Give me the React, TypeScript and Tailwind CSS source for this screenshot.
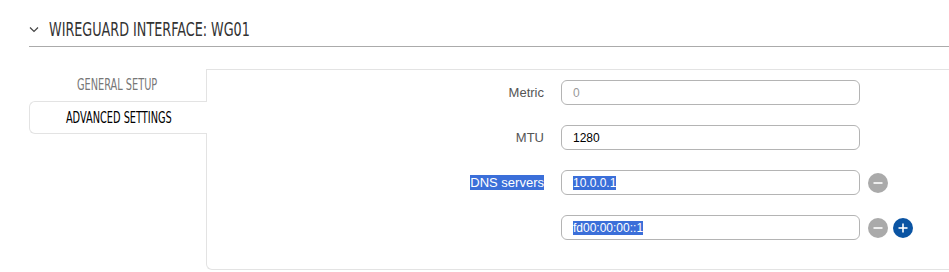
const cond = { fontFamily: '"DejaVu Sans Condensed", "Liberation Sans Narrow", sans-serif' };
const body = { fontFamily: '"Liberation Sans", Arial, sans-serif' };

function RoundBtn({ kind }: { kind: 'minus' | 'plus' }) {
  const bg = kind === 'minus' ? 'bg-[#aaaaaa]' : 'bg-[#0a54a3]';
  return (
    <span className={`flex h-[20px] w-[20px] items-center justify-center rounded-full ${bg}`}>
      <svg width="12" height="12" viewBox="0 0 12 12">
        <path d="M1.5 6h9" stroke="white" strokeWidth="1.6" />
        {kind === 'plus' && <path d="M6 1.5v9" stroke="white" strokeWidth="1.6" />}
      </svg>
    </span>
  );
}

function Row({
  label,
  value,
  placeholder,
  selected,
  buttons = [],
}: {
  label?: string;
  value?: string;
  placeholder?: string;
  selected?: boolean;
  buttons?: ('minus' | 'plus')[];
}) {
  return (
    <div className="flex h-[25px] items-center">
      <div className="w-[338px] pr-px text-right text-[13px] leading-[18px] text-[#555]">
        {label && (selected ? <span className="bg-[#3b6fd9] text-white">{label}</span> : label)}
      </div>
      <div className="ml-[16px] flex h-[25px] w-[299px] items-center rounded-[6px] border border-[#b4b4b4] pl-[11px] text-[12px]">
        {placeholder && <span className="text-[#999]">{placeholder}</span>}
        {value && (selected ? <span className="bg-[#3b6fd9] leading-[14px] text-white">{value}</span> : <span className="text-black">{value}</span>)}
      </div>
      <div className="ml-[8px] flex gap-[5px]">
        {buttons.map((b, i) => (
          <RoundBtn key={i} kind={b} />
        ))}
      </div>
    </div>
  );
}

export default function App() {
  return (
    <div className="h-[272px] w-full overflow-hidden bg-white" style={body}>
      <div className="ml-[29px] flex h-[47px] items-end border-b border-[#ababab] pb-[5px]">
        <svg width="10" height="7" viewBox="0 0 10 7" className="mb-[8px]">
          <path d="M1 1.5l4 4 4-4" fill="none" stroke="#444" strokeWidth="1.2" />
        </svg>
        <h1
          className="ml-[10px] inline-block origin-left scale-x-[0.71] whitespace-nowrap text-[20px] leading-[24px] text-[#333]"
          style={cond}
        >
          WIREGUARD INTERFACE: WG01
        </h1>
      </div>

      <div className="mt-[22px] flex">
        <div className="ml-[29px] w-[177px] shrink-0">
          <div className="flex h-[32px] items-center justify-center text-[16px] text-[#777]" style={cond}>
            <span className="inline-block scale-x-[0.68] whitespace-nowrap">GENERAL SETUP</span>
          </div>
          <div
            className="relative z-10 mr-[-1px] flex h-[33px] items-center justify-center rounded-l-[6px] border border-r-0 border-[#e3e3e3] bg-white text-[16px] text-black"
            style={cond}
          >
            <span className="inline-block scale-x-[0.68] whitespace-nowrap">ADVANCED SETTINGS</span>
          </div>
        </div>
        <div className="h-[201px] flex-1 rounded-bl-[6px] border-b border-l border-t border-[#e3e3e3] pt-[10px]">
          <div className="flex flex-col gap-[20px]">
            <Row label="Metric" placeholder="0" />
            <Row label="MTU" value="1280" />
            <Row label="DNS servers" value="10.0.0.1" selected buttons={['minus']} />
            <Row value="fd00:00:00::1" selected buttons={['minus', 'plus']} />
          </div>
        </div>
      </div>
    </div>
  );
}
